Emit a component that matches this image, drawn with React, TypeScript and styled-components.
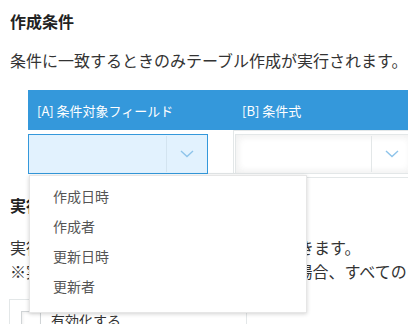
import React from "react";
import styled, { createGlobalStyle } from "styled-components";

const Global = createGlobalStyle`
  html, body { margin: 0; padding: 0; background: #fff; }
  body {
    font-family: "Noto Sans CJK JP", "Noto Sans", sans-serif;
    color: #333;
    overflow: hidden;
  }
`;

const Page = styled.div`
  width: 408px;
  height: 324px;
  overflow: hidden;
  padding: 9px 0 0 10px;
  box-sizing: border-box;
  position: relative;
`;

const Heading = styled.div`
  font-size: 16px;
  font-weight: bold;
  line-height: 24px;
  color: #222;
  white-space: nowrap;
`;

const Desc = styled.div<{ $mt?: number }>`
  font-size: 16px;
  line-height: 24px;
  margin-top: ${(p) => p.$mt ?? 15}px;
  white-space: nowrap;
  color: #333;
`;

const TableWrap = styled.div`
  margin: 18px 0 0 18px;
  position: relative;
  width: 420px;
`;

const HeaderRow = styled.div`
  display: grid;
  grid-template-columns: 205px 1fr;
  height: 40px;
  background: #3498db;
  color: #fff;
  font-size: 13px;
  align-items: center;
`;

const HeaderCell = styled.div`
  padding-left: 9px;
  white-space: nowrap;
`;

const BodyRow = styled.div`
  display: grid;
  grid-template-columns: 205px 1fr;
  height: 48px;
  align-items: start;
`;

const CellOne = styled.div`
  padding-top: 4px;
  height: 44px;
  border-bottom: 1px solid #e3e7e8;
  box-sizing: border-box;
`;

const CellTwo = styled.div`
  height: 48px;
  box-sizing: border-box;
  border-bottom: 1px solid #e3e7e8;
`;

const SelectBox = styled.div<{ $focus?: boolean }>`
  display: flex;
  height: 40px;
  box-sizing: border-box;
  border: 1px solid ${(p) => (p.$focus ? "#3498db" : "#e3e7e8")};
  background: ${(p) => (p.$focus ? "#e2f2fe" : "#fff")};
  box-shadow: ${(p) =>
    p.$focus
      ? "none"
      : "1px 1px 8px #f0f0f0 inset, -1px -1px 8px #f0f0f0 inset"};
`;

const SelectOuter = styled.div`
  width: 200px;
  height: 44px;
  box-sizing: border-box;
  border: 1px solid #e3e7e8;
  padding: 3px 0 0 1px;
  background: #fff;
`;

const SelectValue = styled.div`
  flex: 1;
`;

const Arrow = styled.div<{ $focus?: boolean }>`
  width: 40px;
  border-left: 1px solid ${(p) => (p.$focus ? "#d3e4f0" : "#e3e7e8")};
  margin: 1px 0;
  display: flex;
  align-items: center;
  justify-content: center;
`;

const Menu = styled.div`
  position: absolute;
  left: 1px;
  top: 85px;
  width: 278px;
  box-sizing: border-box;
  background: #fff;
  border: 1px solid #e6e6e6;
  box-shadow: 0 1px 4px rgba(0, 0, 0, 0.18);
  padding: 5px 0 11px;
  z-index: 10;
`;

const MenuItem = styled.div`
  height: 30px;
  line-height: 30px;
  padding-left: 23px;
  font-size: 14px;
  color: #555;
`;

const Section = styled.div`
  margin-top: 15px;
`;

const CheckOuter = styled.div`
  margin: 16px 0 0 -1px;
  width: 238px;
  height: 40px;
  box-sizing: border-box;
  border: 1px solid #e3e7e8;
  padding: 11px 0 0 11px;
  display: flex;
  align-items: flex-start;
  gap: 10px;
`;

const CheckSquare = styled.div`
  flex: 0 0 20px;
  width: 20px;
  height: 20px;
  box-sizing: border-box;
  border: 1px solid #d0d4d6;
  box-shadow: 1px 1px 3px #eee inset;
  background: #fff;
`;

const CheckLabel = styled.div`
  font-size: 14px;
  line-height: 20px;
  margin-top: -1px;
  color: #333;
  white-space: nowrap;
`;

const Chevron = () => (
  <svg width="14" height="8" viewBox="0 0 14 8">
    <polyline points="1,1 7,6.5 13,1" fill="none" stroke="#8ec4ea" strokeWidth="1.4" />
  </svg>
);

export default function App() {
  return (
    <>
      <Global />
      <Page>
        <Heading>作成条件</Heading>
        <Desc>条件に一致するときのみテーブル作成が実行されます。</Desc>
        <TableWrap>
          <HeaderRow>
            <HeaderCell>[A] 条件対象フィールド</HeaderCell>
            <HeaderCell>[B] 条件式</HeaderCell>
          </HeaderRow>
          <BodyRow>
            <CellOne>
              <SelectBox $focus style={{ width: 180 }}>
                <SelectValue />
                <Arrow $focus>
                  <Chevron />
                </Arrow>
              </SelectBox>
            </CellOne>
            <CellTwo>
              <SelectOuter>
                <SelectBox style={{ width: 178 }}>
                  <SelectValue />
                  <Arrow>
                    <Chevron />
                  </Arrow>
                </SelectBox>
              </SelectOuter>
            </CellTwo>
          </BodyRow>
          <Menu>
            <MenuItem>作成日時</MenuItem>
            <MenuItem>作成者</MenuItem>
            <MenuItem>更新日時</MenuItem>
            <MenuItem>更新者</MenuItem>
          </Menu>
        </TableWrap>
        <Section>
          <Heading>実行条件</Heading>
          <Desc $mt={18}>実行条件はアプリごとに個別で設定ができます。</Desc>
          <Desc $mt={0}>※実行条件がひとつも設定されていない場合、すべてのレコードで実行されます。</Desc>
          <CheckOuter>
            <CheckSquare />
            <CheckLabel>有効化する</CheckLabel>
          </CheckOuter>
        </Section>
      </Page>
    </>
  );
}
